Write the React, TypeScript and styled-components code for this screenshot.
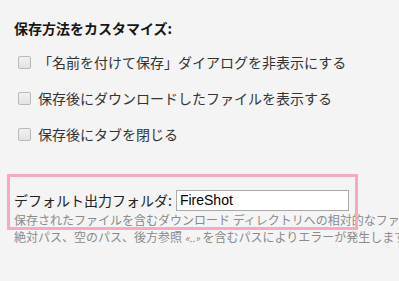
import styled, { createGlobalStyle } from "styled-components";

const Global = createGlobalStyle`
  html, body {
    margin: 0;
    padding: 0;
    background: #f4f4f4;
  }
  body {
    font-family: "Noto Sans CJK JP", "Noto Sans", sans-serif;
    color: #333;
  }
`;

const Page = styled.div`
  padding: 18px 14px 0 14px;
  overflow: hidden;
  height: 263px;
`;

const Heading = styled.div`
  font-size: 14px;
  line-height: 20px;
  font-weight: bold;
  color: #161616;
  margin-bottom: 6px;
`;

const Row = styled.label`
  display: flex;
  align-items: center;
  height: 36px;
  font-size: 14px;
  color: #333;
  white-space: nowrap;
`;

const Check = styled.input.attrs({ type: "checkbox" })`
  appearance: none;
  margin: 0 7px 0 4px;
  width: 13px;
  height: 13px;
  border: 1px solid #b9b9b9;
  border-radius: 2px;
  background: linear-gradient(#f2f2f2, #e2e2e2);
  box-sizing: border-box;
  flex: none;
`;

const Field = styled.div`
  position: relative;
  margin-top: 37px;
`;

const Highlight = styled.div`
  position: absolute;
  left: -7px;
  top: -15px;
  width: 351px;
  height: 56px;
  box-sizing: border-box;
  border: 3px solid #f5a9c6;
  pointer-events: none;
`;

const FieldRow = styled.div`
  display: flex;
  align-items: center;
  height: 22px;
  font-size: 14px;
  color: #222;
  white-space: nowrap;
`;

const TextBox = styled.input`
  margin-left: 4px;
  width: 173px;
  height: 21px;
  box-sizing: border-box;
  border: 1px solid #a9a9a9;
  background: #fff;
  padding: 0 3px;
  font-family: "Liberation Sans", Arial, sans-serif;
  font-size: 14px;
  color: #000;
  outline: none;
`;

const Hint = styled.div`
  font-size: 12px;
  line-height: 17px;
  color: #8a8a8a;
  white-space: nowrap;
  em {
    font-size: 10px;
  }
`;

export default function App() {
  return (
    <>
      <Global />
      <Page>
        <Heading>保存方法をカスタマイズ:</Heading>
        <Row><Check />「名前を付けて保存」ダイアログを非表示にする</Row>
        <Row><Check />保存後にダウンロードしたファイルを表示する</Row>
        <Row><Check />保存後にタブを閉じる</Row>
        <Field>
          <FieldRow>
            デフォルト出力フォルダ:
            <TextBox defaultValue="FireShot" />
          </FieldRow>
          <Hint>
            保存されたファイルを含むダウンロード ディレクトリへの相対的なファイル パス。
            <br />
            絶対パス、空のパス、後方参照 <em>«..»</em> を含むパスによりエラーが発生します。
          </Hint>
          <Highlight />
        </Field>
      </Page>
    </>
  );
}
